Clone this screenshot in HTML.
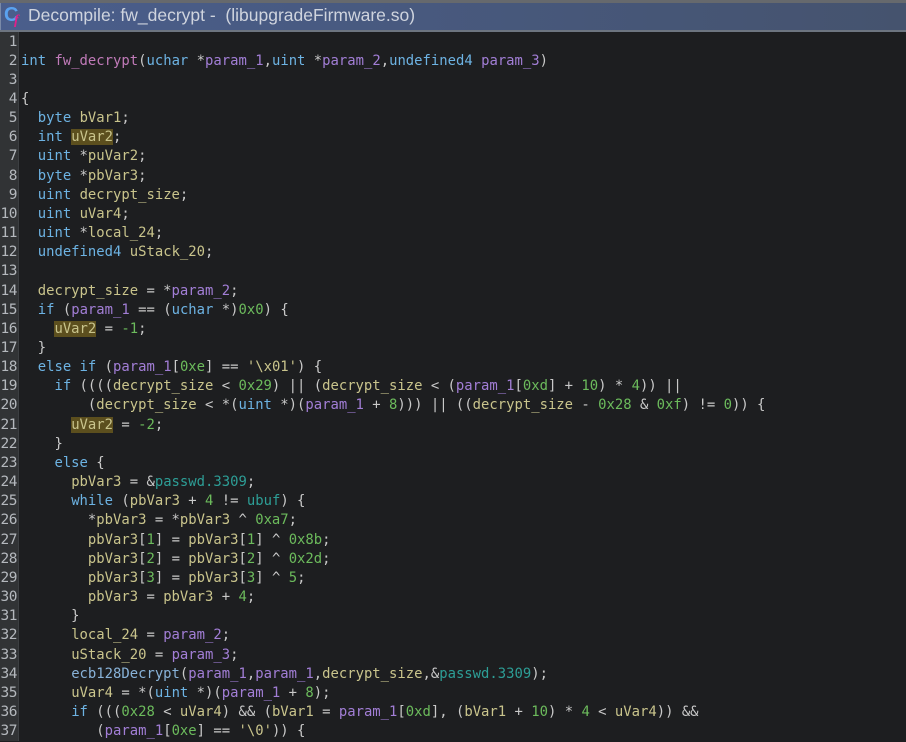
<!DOCTYPE html>
<html><head><meta charset="utf-8"><style>
*{margin:0;padding:0;box-sizing:border-box}
html,body{width:906px;height:741px;overflow:hidden;background:#1d1e20}
#top{position:absolute;left:0;top:0;width:906px;height:3px;background:#66696d}
#title{position:absolute;left:0;top:3px;width:906px;height:27px;background:linear-gradient(90deg,#4a5e8c,#45536e);border-left:1px solid #7a8aa8}
#tb{position:absolute;left:0;top:30px;width:906px;height:2px;background:#6d7580}
#title .t{position:absolute;left:27px;top:2px;font:17.5px "Liberation Sans",sans-serif;color:#cfd4de;white-space:pre}
#ic{position:absolute;left:3px;top:1px;font:bold 20px "Liberation Sans",sans-serif;color:#5aa2f0}
#ic2{position:absolute;left:13px;top:10px;font:italic bold 14px "Liberation Serif",serif;color:#e0208a}
#gut{position:absolute;left:0;top:32px;width:19px;height:709px;background:#313335;border-right:1px solid #3c3f42}
#gut div,#code div{height:19.17px;line-height:19.17px;font:13.9px "DejaVu Sans Mono",monospace;white-space:pre}
#gut{padding-top:1.5px}
#gut div{text-align:right;padding-right:1px;color:#b4b8bd;font-size:14.5px;letter-spacing:-0.5px}
#code{position:absolute;left:21px;top:33.5px;color:#c9c9c9}
.k{color:#6db3e3}.f{color:#c07ab8}.c{color:#88b2d8}.p{color:#a27ed6}.v{color:#c9c48c}.n{color:#6cbb5c}.g{color:#2d9e96}.s{color:#c9c48c}
.h{background:#5c4f1e}
</style></head><body>
<div id="top"></div>
<div id="title"><span id="ic">C</span><span id="ic2">f</span><span class="t">Decompile: fw_decrypt -  (libupgradeFirmware.so)</span></div>
<div id="tb"></div>
<div id="gut">
<div>1</div><div>2</div><div>3</div><div>4</div><div>5</div><div>6</div><div>7</div><div>8</div><div>9</div><div>10</div><div>11</div><div>12</div><div>13</div><div>14</div><div>15</div><div>16</div><div>17</div><div>18</div><div>19</div><div>20</div><div>21</div><div>22</div><div>23</div><div>24</div><div>25</div><div>26</div><div>27</div><div>28</div><div>29</div><div>30</div><div>31</div><div>32</div><div>33</div><div>34</div><div>35</div><div>36</div><div>37</div>
</div>
<div id="code">
<div> </div>
<div><span class="k">int</span> <span class="f">fw_decrypt</span>(<span class="k">uchar</span> *<span class="p">param_1</span>,<span class="k">uint</span> *<span class="p">param_2</span>,<span class="k">undefined4</span> <span class="p">param_3</span>)</div>
<div> </div>
<div>{</div>
<div>  <span class="k">byte</span> <span class="v">bVar1</span>;</div>
<div>  <span class="k">int</span> <span class="v h">uVar2</span>;</div>
<div>  <span class="k">uint</span> *<span class="v">puVar2</span>;</div>
<div>  <span class="k">byte</span> *<span class="v">pbVar3</span>;</div>
<div>  <span class="k">uint</span> <span class="v">decrypt_size</span>;</div>
<div>  <span class="k">uint</span> <span class="v">uVar4</span>;</div>
<div>  <span class="k">uint</span> *<span class="v">local_24</span>;</div>
<div>  <span class="k">undefined4</span> <span class="v">uStack_20</span>;</div>
<div> </div>
<div>  <span class="v">decrypt_size</span> = *<span class="p">param_2</span>;</div>
<div>  <span class="k">if</span> (<span class="p">param_1</span> == (<span class="k">uchar</span> *)<span class="n">0x0</span>) {</div>
<div>    <span class="v h">uVar2</span> = <span class="n">-1</span>;</div>
<div>  }</div>
<div>  <span class="k">else if</span> (<span class="p">param_1</span>[<span class="n">0xe</span>] == <span class="s">'\x01'</span>) {</div>
<div>    <span class="k">if</span> ((((<span class="v">decrypt_size</span> &lt; <span class="n">0x29</span>) || (<span class="v">decrypt_size</span> &lt; (<span class="p">param_1</span>[<span class="n">0xd</span>] + <span class="n">10</span>) * <span class="n">4</span>)) ||</div>
<div>        (<span class="v">decrypt_size</span> &lt; *(<span class="k">uint</span> *)(<span class="p">param_1</span> + <span class="n">8</span>))) || ((<span class="v">decrypt_size</span> - <span class="n">0x28</span> &amp; <span class="n">0xf</span>) != <span class="n">0</span>)) {</div>
<div>      <span class="v h">uVar2</span> = <span class="n">-2</span>;</div>
<div>    }</div>
<div>    <span class="k">else</span> {</div>
<div>      <span class="v">pbVar3</span> = &amp;<span class="g">passwd.3309</span>;</div>
<div>      <span class="k">while</span> (<span class="v">pbVar3</span> + <span class="n">4</span> != <span class="g">ubuf</span>) {</div>
<div>        *<span class="v">pbVar3</span> = *<span class="v">pbVar3</span> ^ <span class="n">0xa7</span>;</div>
<div>        <span class="v">pbVar3</span>[<span class="n">1</span>] = <span class="v">pbVar3</span>[<span class="n">1</span>] ^ <span class="n">0x8b</span>;</div>
<div>        <span class="v">pbVar3</span>[<span class="n">2</span>] = <span class="v">pbVar3</span>[<span class="n">2</span>] ^ <span class="n">0x2d</span>;</div>
<div>        <span class="v">pbVar3</span>[<span class="n">3</span>] = <span class="v">pbVar3</span>[<span class="n">3</span>] ^ <span class="n">5</span>;</div>
<div>        <span class="v">pbVar3</span> = <span class="v">pbVar3</span> + <span class="n">4</span>;</div>
<div>      }</div>
<div>      <span class="v">local_24</span> = <span class="p">param_2</span>;</div>
<div>      <span class="v">uStack_20</span> = <span class="p">param_3</span>;</div>
<div>      <span class="c">ecb128Decrypt</span>(<span class="p">param_1</span>,<span class="p">param_1</span>,<span class="v">decrypt_size</span>,&amp;<span class="g">passwd.3309</span>);</div>
<div>      <span class="v">uVar4</span> = *(<span class="k">uint</span> *)(<span class="p">param_1</span> + <span class="n">8</span>);</div>
<div>      <span class="k">if</span> (((<span class="n">0x28</span> &lt; <span class="v">uVar4</span>) &amp;&amp; (<span class="v">bVar1</span> = <span class="p">param_1</span>[<span class="n">0xd</span>], (<span class="v">bVar1</span> + <span class="n">10</span>) * <span class="n">4</span> &lt; <span class="v">uVar4</span>)) &amp;&amp;</div>
<div>         (<span class="p">param_1</span>[<span class="n">0xe</span>] == <span class="s">'\0'</span>)) {</div>
</div>
</body></html>
